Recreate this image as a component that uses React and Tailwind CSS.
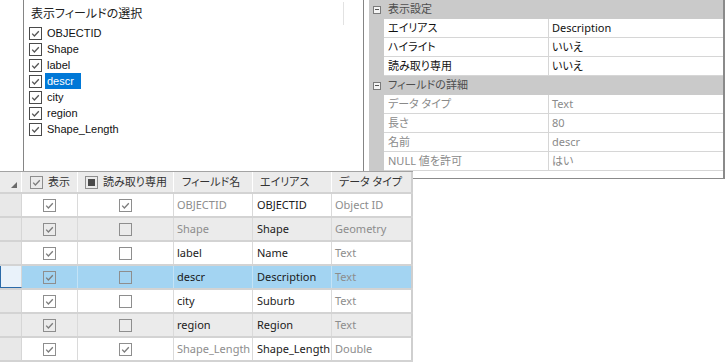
import React from "react";

const Check = ({ checked, dark, partial }) => (
  <svg width="13" height="13" viewBox="0 0 13 13" className="shrink-0 block">
    <rect x="0.5" y="0.5" width="12" height="12" fill="none" stroke={dark ? "#4a4a4a" : "#8e8e8e"} />
    {checked && (
      <path d="M3.2 6.6 L5.4 9 L9.8 4.2" fill="none" stroke={dark ? "#555555" : "#7c7c7c"} strokeWidth="1.3" />
    )}
    {partial && <rect x="3" y="3" width="7" height="7" fill="#4a4a4a" />}
  </svg>
);

const listItems = ["OBJECTID", "Shape", "label", "descr", "city", "region", "Shape_Length"];

const propSections = [
  {
    title: "表示設定",
    rows: [
      ["エイリアス", "Description"],
      ["ハイライト", "いいえ"],
      ["読み取り専用", "いいえ"],
    ],
    dim: false,
  },
  {
    title: "フィールドの詳細",
    rows: [
      ["データ タイプ", "Text"],
      ["長さ", "80"],
      ["名前", "descr"],
      ["NULL 値を許可", "はい"],
    ],
    dim: true,
  },
];

const tableRows = [
  { name: "OBJECTID", nameDim: true, alias: "OBJECTID", type: "Object ID", ro: true, bg: "white" },
  { name: "Shape", nameDim: true, alias: "Shape", type: "Geometry", ro: false, bg: "gray" },
  { name: "label", nameDim: false, alias: "Name", type: "Text", ro: false, bg: "white" },
  { name: "descr", nameDim: false, alias: "Description", type: "Text", ro: false, bg: "sel" },
  { name: "city", nameDim: false, alias: "Suburb", type: "Text", ro: false, bg: "white" },
  { name: "region", nameDim: false, alias: "Region", type: "Text", ro: false, bg: "gray" },
  { name: "Shape_Length", nameDim: true, alias: "Shape_Length", type: "Double", ro: true, bg: "white" },
];

const FONT = "[font-family:'Noto_Sans','Noto_Sans_CJK_JP',sans-serif] [font-feature-settings:'palt']";

export default function App() {
  return (
    <div className={`relative w-[726px] h-[362px] overflow-hidden bg-white text-[11px] text-[#1a1a1a] ${FONT}`}>
      {/* Field list window */}
      <div className="absolute left-[23px] top-0 w-[341px] h-[180px] border-l border-r border-[#858585] bg-white">
        <div className="relative h-[25px] flex items-center pt-[3px] pl-[7px] text-[12px] text-[#222] [font-family:'Liberation_Sans','Noto_Sans_CJK_JP',sans-serif]">
          表示フィールドの選択
          <div className="absolute left-[319px] top-[2px] w-px h-[23px] bg-[#e2e2e2]" />
        </div>
        <div className="flex flex-col [font-family:'Liberation_Sans','Noto_Sans_CJK_JP',sans-serif] text-[11px]">
          {listItems.map((t) => (
            <div key={t} className="h-[16px] flex items-center pl-[5px]">
              <Check checked dark />
              <span
                className={`ml-[3px] h-[16px] flex items-center px-[2px] leading-none ${
                  t === "descr" ? "bg-[#0078d7] text-white w-[36px]" : "text-[#111]"
                }`}
              >
                {t}
              </span>
            </div>
          ))}
        </div>
      </div>

      {/* Property grid window */}
      <div className="absolute left-[369px] top-0 w-[356px] h-[179px] border-r-2 border-b border-[#8a8a8a] bg-white">
        {propSections.map((s) => (
          <div key={s.title}>
            <div className="h-[19px] bg-[#cacaca] flex items-center">
              <div className="w-[15px] flex justify-center">
                <div className="w-[8px] h-[8px] border border-[#7a7a7a] bg-[#f4f4f4] flex items-center justify-center">
                  <div className="w-[4px] h-px bg-[#555]" />
                </div>
              </div>
              <span className="pl-[4px] text-[#4e4e4e]">{s.title}</span>
            </div>
            {s.rows.map(([k, v]) => (
              <div key={k} className="h-[19px] flex">
                <div className="w-[15px] bg-[#cacaca]" />
                <div
                  className={`w-[165px] border-r border-b border-[#d6d6d6] flex items-center pl-[4px] ${
                    s.dim ? "text-[#8a8a8a]" : "text-[#111]"
                  }`}
                >
                  {k}
                </div>
                <div
                  className={`flex-1 border-b border-[#d6d6d6] flex items-center pl-[3px] ${
                    s.dim ? "text-[#8a8a8a]" : "text-[#111]"
                  }`}
                >
                  {v}
                </div>
              </div>
            ))}
          </div>
        ))}
      </div>

      {/* Table window */}
      <div className="absolute left-0 top-[171px] w-[413px] h-[191px] bg-white">
        {/* header */}
        <div className="flex h-[23px] border-t border-[#a3a3a3] border-b-2 border-b-[#d3d3d3] bg-[#ebebeb] text-[#333]">
          <div className="w-[22px] border-r border-white flex items-end justify-end pr-[4px] pb-[4px]">
            <svg width="6" height="6" viewBox="0 0 6 6">
              <polygon points="6,0 6,6 0,6" fill="#6a6a6a" />
            </svg>
          </div>
          <div className="w-[56px] border-r border-white flex items-center pl-[8px] pt-[1px]">
            <Check checked />
            <span className="ml-[5px]">表示</span>
          </div>
          <div className="w-[96px] border-r border-white flex items-center pl-[7px] pt-[1px]">
            <Check partial />
            <span className="ml-[5px]">読み取り専用</span>
          </div>
          <div className="w-[79px] border-r border-white flex items-center pl-[8px] pt-[1px]">フィールド名</div>
          <div className="w-[79px] border-r border-white flex items-center pl-[7px] pt-[1px]">エイリアス</div>
          <div className="w-[81px] border-r-2 border-[#cfcfcf] flex items-center pl-[7px] pt-[1px]">データ タイプ</div>
        </div>
        {tableRows.map((r) => {
          const bg =
            r.bg === "sel" ? "bg-[#a3d4f2]" : r.bg === "gray" ? "bg-[#ebebeb]" : "bg-white";
          const sep = r.bg === "sel" ? "border-[#c4e3f6]" : "border-[#dadada]";
          return (
            <div key={r.name} className={`flex h-[24px] border-b-2 border-[#d3d3d3] ${bg}`}>
              <div
                className={`w-[22px] border-r border-r-[#d6d6d6] ${
                  r.bg === "sel" ? "bg-[#e9f2fa] border-l border-l-[#2a6aa8] border-b border-b-[#2a6aa8]" : "bg-[#e8e8e8]"
                }`}
              />
              <div className={`w-[56px] border-r ${sep} flex items-center justify-center`}>
                <Check checked />
              </div>
              <div className={`w-[96px] border-r ${sep} flex items-center justify-center`}>
                <Check checked={r.ro} />
              </div>
              <div
                className={`w-[79px] border-r ${sep} flex items-center pl-[3px] overflow-hidden whitespace-nowrap ${
                  r.nameDim ? "text-[#8d8d8d]" : "text-[#1a1a1a]"
                }`}
              >
                {r.name}
              </div>
              <div className={`w-[79px] border-r ${sep} flex items-center pl-[4px] overflow-hidden whitespace-nowrap text-[#1a1a1a]`}>
                {r.alias}
              </div>
              <div className="w-[81px] border-r-2 border-[#cfcfcf] flex items-center pl-[3px] text-[#8d8d8d] whitespace-nowrap">
                {r.type}
              </div>
            </div>
          );
        })}
      </div>
    </div>
  );
}
